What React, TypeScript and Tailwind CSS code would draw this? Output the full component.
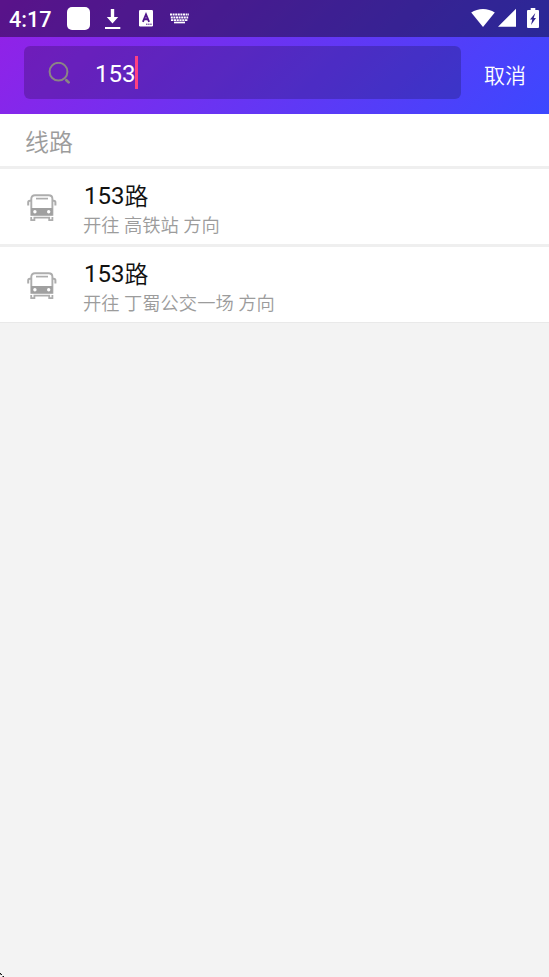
import { useState } from "react";

interface BusLine {
    id: number;
    number: string;
    terminal: string;
}

const lines: BusLine[] = [
    { id: 1, number: "153", terminal: "高铁站" },
    { id: 2, number: "153", terminal: "丁蜀公交一场" },
];

function StatusBar() {
    return (
        <div className="h-[37px] bg-black/40 flex items-center text-white">
            <span className="ml-[9px] w-[58px] text-[21.6px] leading-none font-medium pt-[2px]">4:17</span>
            <span className="w-[23px] h-[23px] rounded-[5px] bg-white" />
            <svg className="ml-[15px]" width="16" height="20" viewBox="0 0 16 20" fill="currentColor">
                <path d="M5.8 0h3.4v8h4L7.5 14.5 1.8 8h4zM0 17.9h15.3v2H0z" />
            </svg>
            <svg className="ml-[18px]" width="14" height="17" viewBox="0 0 14 17">
                <rect width="14" height="16.5" rx="1.2" fill="currentColor" />
                <path d="M3.9 11.8 7 4.4l3.1 7.4M5 9.3h4" fill="none" stroke="#50168c" strokeWidth="1.9" />
                <path d="M7 14.2h6" stroke="#50168c" strokeWidth="1" strokeDasharray="1.5 .6" />
            </svg>
            <svg className="ml-[17px]" width="19" height="11" viewBox="0 0 19 11" fill="none" stroke="currentColor">
                <path d="M0 1.5h19" strokeWidth="2" strokeDasharray="2 .6" />
                <path d="M.8 4.4h17.4" strokeWidth="2" strokeDasharray="2 .6" />
                <path d="M1 7.2h17" strokeWidth="1.7" strokeDasharray="2.2 .6" />
                <path d="M4 9.5h11" strokeWidth="1.7" />
            </svg>

            <div className="ml-auto mr-[10px] mb-[2px] flex items-center">
                <svg width="24" height="20" viewBox="0 0 24 20" fill="currentColor">
                    <path d="M.2 4.6C7-.3 17-.3 23.8 4.6L12 19z" />
                </svg>
                <svg className="ml-[3px]" width="19" height="19" viewBox="0 0 19 19" fill="currentColor">
                    <path d="M18 .7v18H0z" />
                </svg>
                <svg className="ml-[10px]" width="12" height="20" viewBox="0 0 12 20">
                    <path d="M3.7 0h4.6v2H11q1 0 1 1v16q0 1-1 1H1q-1 0-1-1V3q0-1 1-1h2.7z" fill="currentColor" />
                    <path d="M8.3 5 3 11.5h2.3L4 17l5-7H6.7z" fill="#2f2490" />
                </svg>
            </div>
        </div>
    );
}

function BusIcon() {
    return (
        <svg width="30" height="28" viewBox="0 0 30 28" fill="none" stroke="#adadad" strokeWidth="1.9">
            <path d="M4.3 20.7V4.8Q4.3 1.3 8 1.3h13.6q3.8 0 3.8 3.5v15.9z" />
            <path d="M9 4.6h12" strokeWidth="1.7" />
            <path d="M4 6.8H2.8Q1.2 6.8 1.2 8.6v3M25.6 6.8h1.2q1.6 0 1.6 1.8v3" strokeWidth="2" />
            <path d="M4 14h21.6v7.4H4z" fill="#a0a0a0" stroke="none" />
            <circle cx="7.9" cy="17.8" r="1.7" fill="#fff" stroke="none" />
            <circle cx="21.7" cy="17.8" r="1.7" fill="#fff" stroke="none" />
            <path d="M4.2 23v3.2h3.2v-2.5h14.8v2.5h3.2V23" strokeWidth="1.8" />
        </svg>
    );
}

function LineItem({ line }: { line: BusLine }) {
    return (
        <li className="h-[78px] bg-white border-b-[3px] border-[#efefef] last:border-b last:border-[#e9e9e9] last:h-[76px] flex items-start">
            <div className="w-[84px] pl-[27px] pt-[25px]">
                <BusIcon />
            </div>
            <div className="pt-[10px]">
                <div className="text-[24px] leading-[34px] text-[#111]">
                    {line.number}
                    <span className="relative top-px font-[350]">路</span>
                </div>
                <div className="-ml-px pt-px text-[18.3px] leading-[24px] font-[350] text-[#9c9c9c]">开往 {line.terminal} 方向</div>
            </div>
        </li>
    );
}

export default function App() {
    const [keyword, setKeyword] = useState("153");

    return (
        <div className="relative h-screen overflow-hidden bg-[#f3f3f3] font-[Roboto,'Noto_Sans_CJK_SC',sans-serif]">
            <header className="h-[114px] bg-linear-[135deg,#9520e6,#3c48ff]">
                <StatusBar />
                <div className="flex items-center pt-[9px] pl-[24px]">
                    <label className="relative w-[437px] h-[53px] rounded-[6px] bg-black/20 flex items-center">
                        <svg className="ml-[24px]" width="22" height="22" viewBox="0 0 22 22" fill="none" stroke="#8b8585" strokeWidth="2">
                            <circle cx="10.5" cy="9.7" r="8.9" />
                            <path d="m18.4 18.2 2.2 2.2" strokeWidth="2.7" strokeLinecap="round" />
                        </svg>
                        <input
                            type="text"
                            className="ml-[25px] mt-[3px] w-[340px] bg-transparent outline-none text-[24px] leading-[34px] text-white"
                            value={keyword}
                            onChange={(e) => setKeyword(e.target.value)}
                        />
                        <span className="absolute left-[111px] top-[10px] w-[3px] h-[33px] bg-[#ff4081]" />
                    </label>
                    <button className="ml-[23px] pt-[7px] text-[21px] leading-[30px] font-[350] text-white">取消</button>
                </div>
            </header>

            <h2 className="h-[55px] pt-[11px] pl-[25px] bg-white border-b-[3px] border-[#efefef] text-[24px] leading-[36px] font-[350] text-[#9c9c9c]">
                线路
            </h2>
            <ul>
                {lines.map((line) => (
                    <LineItem key={line.id} line={line} />
                ))}
            </ul>

            <svg className="absolute left-0 bottom-0" width="4" height="4" viewBox="0 0 4 4" shapeRendering="crispEdges">
                <path d="M0 0h1v1H0zM1 1h1v1H1zM3 3h1v1H3z" fill="#111" />
                <path d="M0 1h1v1H0zM2 3h1v1H2z" fill="#888" />
            </svg>
        </div>
    );
}
